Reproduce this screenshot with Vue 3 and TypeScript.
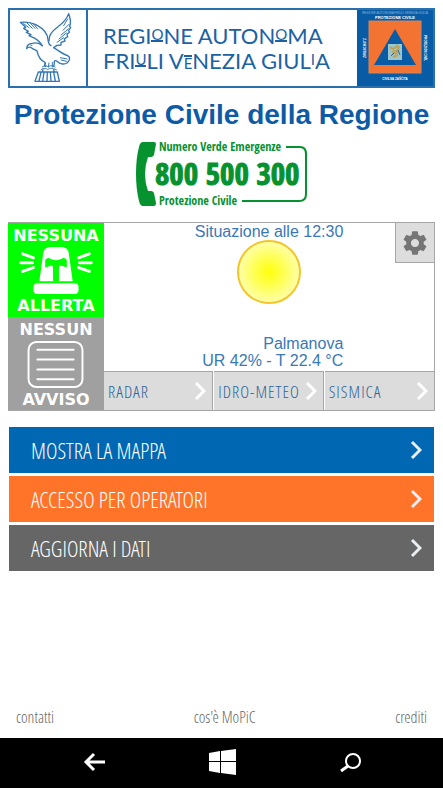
<script setup lang="ts">
interface Item {
  label: string
  tone?: string
}

const sections: Item[] = [{ label: 'RADAR' }, { label: 'IDRO-METEO' }, { label: 'SISMICA' }]

const actions: Item[] = [
  { label: 'MOSTRA LA MAPPA', tone: 'blue' },
  { label: 'ACCESSO PER OPERATORI', tone: 'orange' },
  { label: 'AGGIORNA I DATI', tone: 'grey' },
]

const links: string[] = ['contatti', "cos'è MoPiC", 'crediti']
</script>

<template>
  <div class="page">
    <main class="content">
      <header class="banner">
        <svg class="eagle" viewBox="15 15 228 228" aria-hidden="true">
          <g fill="none" stroke="#3277b3" stroke-width="4" stroke-linejoin="round" stroke-linecap="round">
            <path d="M112 122 C98 98 84 98 72 92 L78 89 L64 82 L70 79 L56 70 L62 67 L46 52 C66 50 84 54 98 62 C116 72 128 86 129 104 C130 114 132 120 138 122" />
            <path d="M132 108 C130 88 144 76 158 66 C174 54 186 42 191 26 C198 44 197 56 194 64 L197 68 L191 76 L193 82 L186 88 L188 95 L178 102 L180 108 L168 112 L168 120 L156 121 L146 128" />
            <path d="M56 56 L72 68 M66 54 L82 70 M76 54 L90 70 M86 57 L98 72 M188 42 L176 62 M192 58 L174 76 M190 72 L168 90 M184 84 L162 102 M176 98 L156 112" stroke-width="3" />
            <path d="M112 122 C104 114 94 112 82 115 C72 116 65 120 65 131 C70 125 76 126 80 129 C86 134 92 134 96 138 C100 156 110 168 120 172 C118 178 118 180 122 184" />
            <path d="M146 128 C160 136 174 148 188 152 C198 158 194 166 186 174 C176 180 164 176 158 170 C150 164 146 168 148 176 L146 184" />
            <path d="M166 158 L186 162 M168 165 L184 169 M78 121 h3 M122 174 L118 184 M132 174 L130 186 M142 172 L142 186 M112 186 C118 180 126 182 130 186 C136 180 142 182 150 186 M108 194 C116 188 124 190 128 194 C136 188 142 190 154 194" stroke-width="3" />
            <path d="M100 201 L157 201 L163 229 L90 229 Z M108 202 L102 228 M117 202 L113 228 M127 202 L126 228 M136 202 L138 228 M146 202 L151 228 M114 194 L112 201 M146 194 L148 201" />
          </g>
        </svg>
        <div class="region">
          <span class="region-line">REGI<span class="mini under">O</span>NE AUTON<span class="mini under">O</span>MA</span>
          <span class="region-line">FRI<span class="mini under">U</span>LI V<span class="mini over">E</span>NEZIA GIUL<span class="mini">I</span>A</span>
        </div>
        <svg class="emblem" viewBox="0 0 76 76" role="img" aria-label="Protezione Civile">
          <rect width="76" height="76" fill="#075ca5" />
          <rect x="12" y="11" width="52" height="52" fill="#f37432" stroke="#d78358" stroke-width="1" />
          <path d="M38 19 L59 55 H17 Z" fill="#075ca5" />
          <rect x="31" y="34" width="14" height="16" fill="#9dc5cb" />
          <path d="M33 37 q3 3 5 1 l3 -3 M35 41 q3 2 7 -2 M35 44 l6 -2 M36 47 l5 -2 M42 36 l-2 8" fill="none" stroke="#c2a24e" stroke-width="2" />
          <path d="M34 46 l3 -3 M41 40 l2 5" stroke="#31679a" stroke-width="1" />
          <g fill="#fff" font-family="Liberation Sans" font-weight="bold" text-anchor="middle">
            <text x="38" y="4" font-size="3" opacity="0.5" font-weight="normal">REGIONE AUTONOMA FRIULI VENEZIA GIULIA</text>
            <text x="38" y="9" font-size="4">PROTEZIONE CIVILE</text>
            <text x="38" y="70" font-size="3">CIVILNA ZAŠČITA</text>
            <text transform="translate(9 38) rotate(-90)" font-size="3">ZIVILSCHUTZ</text>
            <text transform="translate(67 38) rotate(90)" font-size="3">PROTEZION CIVÎL</text>
          </g>
        </svg>
      </header>

      <h1 class="title">Protezione Civile della Regione</h1>

      <a class="hotline" href="tel:800500300">
        <svg viewBox="0 -4 172 74" aria-hidden="true">
          <path d="M7 1 H18 Q20 1 20 3 L18 14 Q17 16 15 16 H12 Q9 24 9 33 Q9 42 12 50 H15 Q17 50 18 52 L20 62 Q20 65 18 65 H7 Q4 65 3 60 Q0 48 0 33 Q0 17 3 6 Q4 1 7 1 Z" fill="#06922f" />
          <path d="M150 6 H164 Q170 6 170 13 V53 Q170 60 163 60 H106" fill="none" stroke="#06922f" stroke-width="2" />
          <g class="hotline-text">
            <text x="23" y="10" font-size="12">Numero Verde Emergenze</text>
            <text x="19" y="44" font-size="31" class="number">800 500 300</text>
            <text x="23" y="64" font-size="12">Protezione Civile</text>
          </g>
        </svg>
      </a>

      <section class="panel">
        <div class="states">
          <a class="state alert" href="#allerta">
            <span>NESSUNA</span>
            <svg viewBox="0 0 74 50" aria-hidden="true">
              <path d="M20 36 L24 7 Q25 1 32 1 H42 Q49 1 50 7 L54 36 Z" fill="#fff" />
              <path d="M26 14 L29 12 Q37 17 45 12 L48 14 V22 L42 20 Q40 20 40 23 V36 H34 V23 Q34 20 32 20 L26 22 Z" fill="#0f0" />
              <rect x="14" y="38" width="46" height="11" rx="4" fill="#fff" />
              <path d="M3 8 L14 12 M1 17 H13 M3 26 L14 22 M71 8 L60 12 M73 17 H61 M71 26 L60 22" stroke="#fff" stroke-width="3" stroke-linecap="round" />
            </svg>
            <span>ALLERTA</span>
          </a>
          <a class="state notice" href="#avviso">
            <span>NESSUN</span>
            <svg viewBox="0 0 74 50" aria-hidden="true">
              <rect x="9" y="2" width="55" height="46" rx="8" fill="none" stroke="#fff" stroke-width="2" />
              <path d="M18 10 H55 M18 20 H55 M18 30 H55 M18 40 H55" stroke="#fff" stroke-width="2" stroke-linecap="round" />
            </svg>
            <span>AVVISO</span>
          </a>
        </div>
        <div class="right">
          <div class="weather">
            <div class="report">
              <span>Situazione alle 12:30</span>
              <svg class="sun" viewBox="0 0 64 64" aria-hidden="true">
                <defs>
                  <radialGradient id="glow">
                    <stop offset="0" stop-color="#ffff0c" />
                    <stop offset="0.5" stop-color="#ffff58" />
                    <stop offset="1" stop-color="#ffffac" />
                  </radialGradient>
                </defs>
                <circle cx="32" cy="32" r="31" fill="url(#glow)" stroke="#f3c52b" stroke-width="2" />
              </svg>
              <span class="place">Palmanova<br />UR 42% - T 22.4 °C</span>
            </div>
            <button class="settings" type="button" aria-label="Impostazioni">
              <svg viewBox="0 0 24 24" aria-hidden="true">
                <path fill="#757575" d="M19.43 12.98c.04-.32.07-.64.07-.98s-.03-.66-.07-.98l2.11-1.65c.19-.15.24-.42.12-.64l-2-3.46c-.12-.22-.39-.3-.61-.22l-2.49 1c-.52-.4-1.08-.73-1.69-.98l-.38-2.65C14.46 2.18 14.25 2 14 2h-4c-.25 0-.46.18-.49.42l-.38 2.65c-.61.25-1.17.59-1.69.98l-2.49-1c-.23-.09-.49 0-.61.22l-2 3.46c-.13.22-.07.49.12.64l2.11 1.65c-.04.32-.07.65-.07.98s.03.66.07.98l-2.11 1.65c-.19.15-.24.42-.12.64l2 3.46c.12.22.39.3.61.22l2.49-1c.52.4 1.08.73 1.69.98l.38 2.65c.03.24.24.42.49.42h4c.25 0 .46-.18.49-.42l.38-2.65c.61-.25 1.17-.59 1.69-.98l2.49 1c.23.09.49 0 .61-.22l2-3.46c.12-.22.07-.49-.12-.64l-2.11-1.65zM12 15.5c-1.93 0-3.5-1.57-3.5-3.5s1.57-3.5 3.5-3.5 3.5 1.57 3.5 3.5-1.57 3.5-3.5 3.5z" />
              </svg>
            </button>
          </div>
          <nav class="tabs">
            <button v-for="s in sections" :key="s.label" type="button" class="tab">
              <span>{{ s.label }}</span>
              <svg viewBox="0 0 12 20" aria-hidden="true"><path d="M2 2 L10 10 L2 18" /></svg>
            </button>
          </nav>
        </div>
      </section>

      <div class="actions">
        <button v-for="a in actions" :key="a.label" type="button" class="action" :class="a.tone">
          <span>{{ a.label }}</span>
          <svg viewBox="0 0 12 20" aria-hidden="true"><path d="M2 2 L10 10 L2 18" /></svg>
        </button>
      </div>

      <footer class="links">
        <a v-for="l in links" :key="l" href="#">{{ l }}</a>
      </footer>
    </main>

    <nav class="system">
      <button type="button" aria-label="Indietro">
        <svg class="key" viewBox="0 0 28 28" aria-hidden="true">
          <path d="M24 14 H6 M13 6 L5 14 L13 22" fill="none" stroke="#fff" stroke-width="3" />
        </svg>
      </button>
      <button type="button" aria-label="Start">
        <svg class="key" viewBox="0 0 28 28" aria-hidden="true">
          <path d="M1 5 L12 3 V13 H1 Z M13 3 L28 1 V13 H13 Z M1 14 H12 V25 L1 23 Z M13 14 H28 V27 L13 25 Z" fill="#fff" />
        </svg>
      </button>
      <button type="button" aria-label="Cerca">
        <svg class="key" viewBox="0 0 28 28" aria-hidden="true">
          <circle cx="17" cy="13" r="7" fill="none" stroke="#fff" stroke-width="2" />
          <path d="M12 18 L5 23" stroke="#fff" stroke-width="3" />
        </svg>
      </button>
    </nav>
  </div>
</template>

<style>
body {
  background: #fff;
}
</style>

<style scoped>
.page {
  --narrow: 'Open Sans Condensed Light', 'Open Sans Condensed', 'Liberation Sans Narrow', 'Liberation Sans', sans-serif;
  display: flex;
  flex-direction: column;
  min-height: 100vh;
  font-family: 'Liberation Sans', sans-serif;
}
.page *,
.page {
  box-sizing: border-box;
}
svg {
  display: block;
}
a {
  text-decoration: none;
}
button {
  margin: 0;
  padding: 0;
  border: 0;
  border-radius: 0;
  background: none;
  font: inherit;
}
.content {
  flex: 1;
  display: flex;
  flex-direction: column;
  padding: 8px 8px 0;
}
.banner {
  display: flex;
  height: 80px;
  border: 2px solid #2a6fae;
}
.eagle {
  width: 76px;
  flex: none;
}
.region {
  flex: 1;
  display: flex;
  flex-direction: column;
  justify-content: center;
  padding-left: 15px;
  border-left: 2px solid #2a6fae;
  color: #1c62a3;
  font-family: Lato, sans-serif;
  font-size: 22px;
  line-height: 25px;
  white-space: nowrap;
}
.region-line {
  display: block;
  height: 25px;
}
.mini {
  display: inline-block;
  font-size: 15px;
  line-height: 12px;
  vertical-align: 4px;
}
.under {
  border-bottom: 2px solid #1c62a3;
}
.over {
  border-top: 2px solid #1c62a3;
  vertical-align: 0;
}
.emblem {
  width: 76px;
  flex: none;
  background: #075ca5;
}
.title {
  margin: 10px 0 0;
  color: #0d5ba6;
  font-size: 28px;
  line-height: 34px;
  text-align: center;
  white-space: nowrap;
}
.hotline {
  align-self: center;
  margin-top: 5px;
}
.hotline svg {
  width: 172px;
  height: 74px;
}
.hotline-text {
  fill: #06922f;
  font-family: 'Open Sans Condensed', 'Roboto Condensed', 'Liberation Sans Narrow', sans-serif;
  font-weight: 700;
}
.number {
  stroke: #06922f;
  stroke-width: 1px;
}
.panel {
  display: flex;
  margin-top: 11px;
  border: 1px solid #a6a6a6;
  border-left: 0;
}
.states {
  width: 96px;
  flex: none;
  display: flex;
  flex-direction: column;
}
.state {
  flex: 1;
  display: flex;
  flex-direction: column;
  align-items: center;
  justify-content: center;
  padding-top: 2px;
  color: #fff;
  font-family: 'DejaVu Sans', sans-serif;
  font-size: 16px;
  font-weight: bold;
  line-height: 21px;
}
.state svg {
  width: 74px;
  height: 49px;
}
.alert {
  background: #0f0;
}
.notice {
  background: #a0a0a0;
}
.right {
  flex: 1;
  display: flex;
  flex-direction: column;
}
.weather {
  position: relative;
  display: flex;
  justify-content: center;
  height: 148px;
  color: #3a78b4;
  font-size: 16px;
  line-height: 17px;
}
.report {
  display: flex;
  flex-direction: column;
}
.sun {
  width: 64px;
  align-self: center;
}
.place {
  margin-top: auto;
  padding-bottom: 2px;
  text-align: right;
}
.settings {
  position: absolute;
  top: 0;
  right: 0;
  display: grid;
  place-items: center;
  width: 39px;
  height: 40px;
  border-left: 1px solid #a6a6a6;
  border-bottom: 1px solid #a6a6a6;
  background: #ddd;
}
.settings svg {
  width: 28px;
}
.tabs {
  display: grid;
  grid-template-columns: repeat(3, 1fr);
  gap: 1px;
}
.tab {
  display: flex;
  align-items: center;
  justify-content: space-between;
  height: 39px;
  padding: 0 6px 0 4px;
  border-top: 1px solid #a6a6a6;
  border-right: 1px solid #a6a6a6;
  background: #dcdcdc;
  color: #2a6499;
  font-family: var(--narrow);
  font-size: 17px;
  letter-spacing: 1px;
  white-space: nowrap;
}
.tab:last-child {
  border-right: 0;
}
.tab svg,
.action svg {
  width: 12px;
  height: 20px;
  flex: none;
}
.tab path,
.action path {
  fill: none;
  stroke: #fff;
  stroke-width: 3;
}
.actions {
  display: flex;
  flex-direction: column;
  gap: 3px;
  margin-top: 16px;
  padding: 0 1px;
}
.action {
  display: flex;
  align-items: center;
  justify-content: space-between;
  height: 46px;
  padding: 0 12px 0 22px;
  color: #fff;
  font-family: var(--narrow);
  font-size: 22px;
  font-weight: 300;
}
.action path {
  stroke: #e8eef2;
}
.blue {
  background: #0068b3;
}
.orange {
  background: #ff7429;
}
.grey {
  background: #666;
}
.links {
  display: flex;
  justify-content: space-between;
  margin-top: auto;
  padding: 0 8px 9px;
  font-family: var(--narrow);
  font-size: 16px;
  font-weight: 300;
  line-height: 24px;
}
.links a {
  color: #666;
}
.system {
  display: flex;
  justify-content: space-around;
  align-items: center;
  height: 50px;
  padding: 0 29px 2px 31px;
  background: #000;
}
.key {
  width: 28px;
  height: 28px;
}
</style>
